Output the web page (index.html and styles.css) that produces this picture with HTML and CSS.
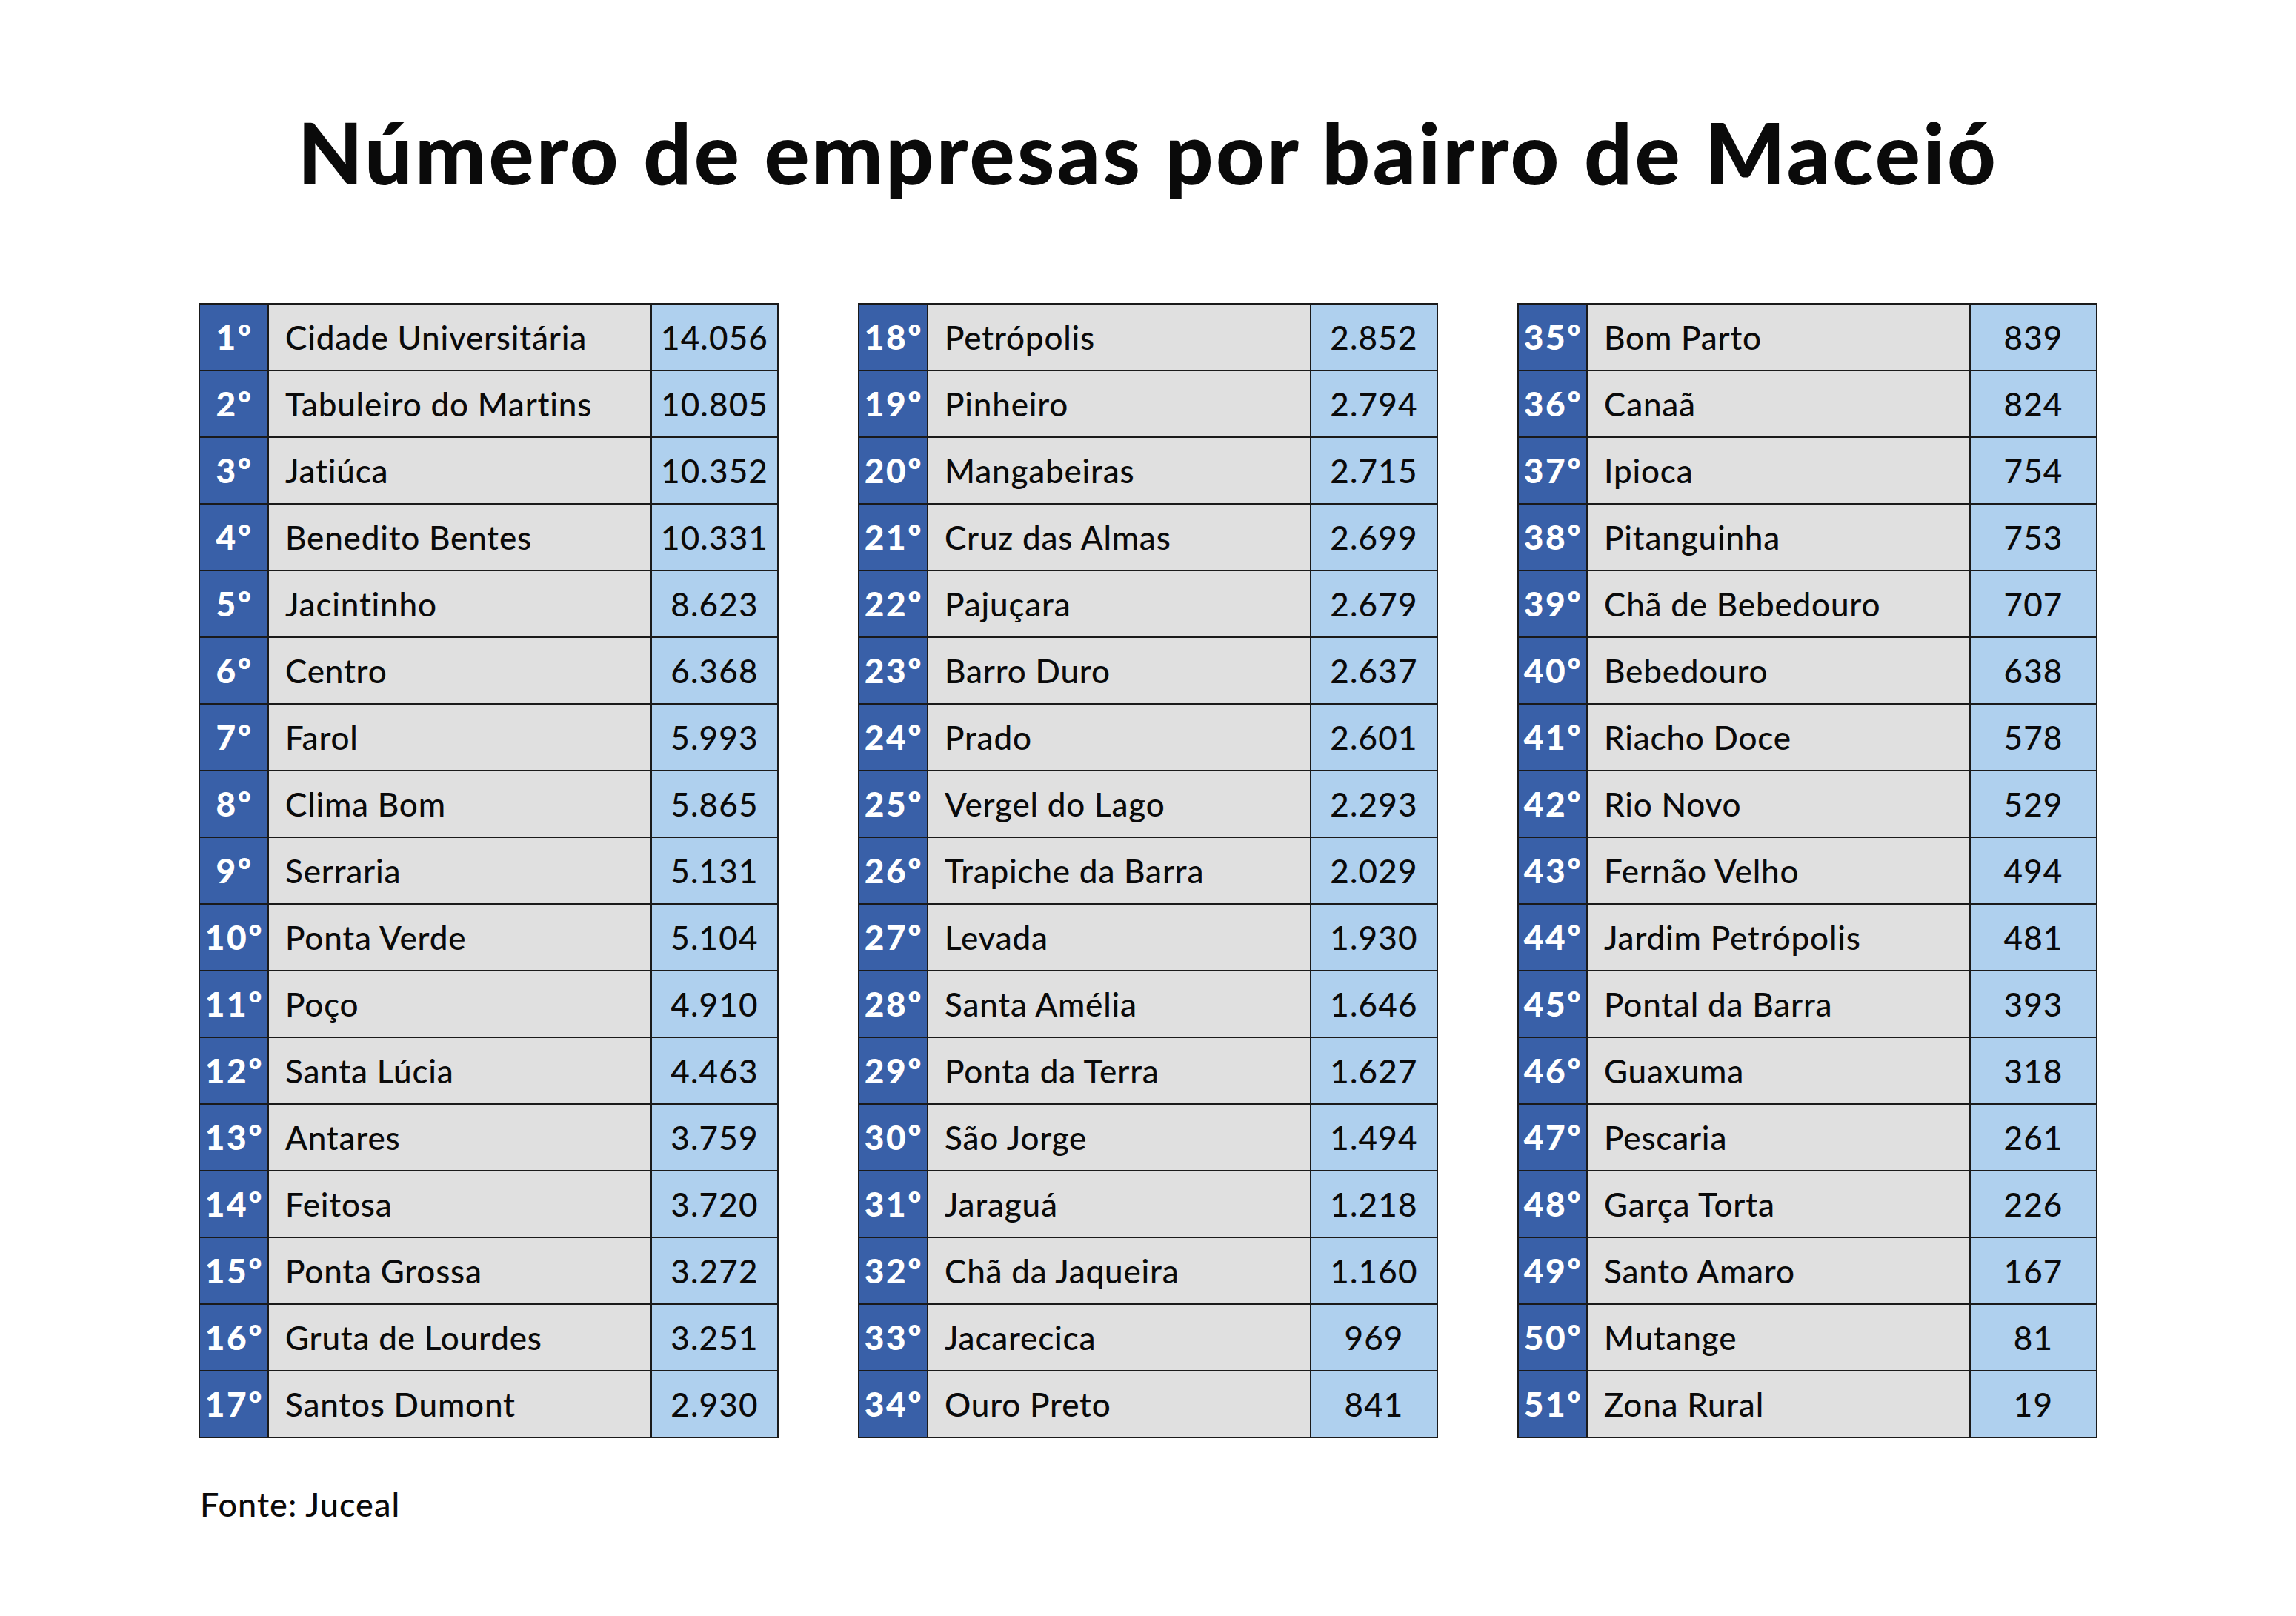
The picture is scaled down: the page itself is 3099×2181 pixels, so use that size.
FILE: index.html
```html
<!DOCTYPE html>
<html lang="pt-BR">
<head>
<meta charset="utf-8">
<title>Número de empresas por bairro de Maceió</title>
<link rel="stylesheet" href="styles.css">
</head>
<body>
<main class="page">
  <h1 class="title">Número de empresas por bairro de Maceió</h1>
  <div class="tables">
    <table class="rank-table">
      <tr><td class="pos">1º</td><td class="name">Cidade Universitária</td><td class="num">14.056</td></tr>
      <tr><td class="pos">2º</td><td class="name">Tabuleiro do Martins</td><td class="num">10.805</td></tr>
      <tr><td class="pos">3º</td><td class="name">Jatiúca</td><td class="num">10.352</td></tr>
      <tr><td class="pos">4º</td><td class="name">Benedito Bentes</td><td class="num">10.331</td></tr>
      <tr><td class="pos">5º</td><td class="name">Jacintinho</td><td class="num">8.623</td></tr>
      <tr><td class="pos">6º</td><td class="name">Centro</td><td class="num">6.368</td></tr>
      <tr><td class="pos">7º</td><td class="name">Farol</td><td class="num">5.993</td></tr>
      <tr><td class="pos">8º</td><td class="name">Clima Bom</td><td class="num">5.865</td></tr>
      <tr><td class="pos">9º</td><td class="name">Serraria</td><td class="num">5.131</td></tr>
      <tr><td class="pos">10º</td><td class="name">Ponta Verde</td><td class="num">5.104</td></tr>
      <tr><td class="pos">11º</td><td class="name">Poço</td><td class="num">4.910</td></tr>
      <tr><td class="pos">12º</td><td class="name">Santa Lúcia</td><td class="num">4.463</td></tr>
      <tr><td class="pos">13º</td><td class="name">Antares</td><td class="num">3.759</td></tr>
      <tr><td class="pos">14º</td><td class="name">Feitosa</td><td class="num">3.720</td></tr>
      <tr><td class="pos">15º</td><td class="name">Ponta Grossa</td><td class="num">3.272</td></tr>
      <tr><td class="pos">16º</td><td class="name">Gruta de Lourdes</td><td class="num">3.251</td></tr>
      <tr><td class="pos">17º</td><td class="name">Santos Dumont</td><td class="num">2.930</td></tr>
    </table>
    <table class="rank-table">
      <tr><td class="pos">18º</td><td class="name">Petrópolis</td><td class="num">2.852</td></tr>
      <tr><td class="pos">19º</td><td class="name">Pinheiro</td><td class="num">2.794</td></tr>
      <tr><td class="pos">20º</td><td class="name">Mangabeiras</td><td class="num">2.715</td></tr>
      <tr><td class="pos">21º</td><td class="name">Cruz das Almas</td><td class="num">2.699</td></tr>
      <tr><td class="pos">22º</td><td class="name">Pajuçara</td><td class="num">2.679</td></tr>
      <tr><td class="pos">23º</td><td class="name">Barro Duro</td><td class="num">2.637</td></tr>
      <tr><td class="pos">24º</td><td class="name">Prado</td><td class="num">2.601</td></tr>
      <tr><td class="pos">25º</td><td class="name">Vergel do Lago</td><td class="num">2.293</td></tr>
      <tr><td class="pos">26º</td><td class="name">Trapiche da Barra</td><td class="num">2.029</td></tr>
      <tr><td class="pos">27º</td><td class="name">Levada</td><td class="num">1.930</td></tr>
      <tr><td class="pos">28º</td><td class="name">Santa Amélia</td><td class="num">1.646</td></tr>
      <tr><td class="pos">29º</td><td class="name">Ponta da Terra</td><td class="num">1.627</td></tr>
      <tr><td class="pos">30º</td><td class="name">São Jorge</td><td class="num">1.494</td></tr>
      <tr><td class="pos">31º</td><td class="name">Jaraguá</td><td class="num">1.218</td></tr>
      <tr><td class="pos">32º</td><td class="name">Chã da Jaqueira</td><td class="num">1.160</td></tr>
      <tr><td class="pos">33º</td><td class="name">Jacarecica</td><td class="num">969</td></tr>
      <tr><td class="pos">34º</td><td class="name">Ouro Preto</td><td class="num">841</td></tr>
    </table>
    <table class="rank-table">
      <tr><td class="pos">35º</td><td class="name">Bom Parto</td><td class="num">839</td></tr>
      <tr><td class="pos">36º</td><td class="name">Canaã</td><td class="num">824</td></tr>
      <tr><td class="pos">37º</td><td class="name">Ipioca</td><td class="num">754</td></tr>
      <tr><td class="pos">38º</td><td class="name">Pitanguinha</td><td class="num">753</td></tr>
      <tr><td class="pos">39º</td><td class="name">Chã de Bebedouro</td><td class="num">707</td></tr>
      <tr><td class="pos">40º</td><td class="name">Bebedouro</td><td class="num">638</td></tr>
      <tr><td class="pos">41º</td><td class="name">Riacho Doce</td><td class="num">578</td></tr>
      <tr><td class="pos">42º</td><td class="name">Rio Novo</td><td class="num">529</td></tr>
      <tr><td class="pos">43º</td><td class="name">Fernão Velho</td><td class="num">494</td></tr>
      <tr><td class="pos">44º</td><td class="name">Jardim Petrópolis</td><td class="num">481</td></tr>
      <tr><td class="pos">45º</td><td class="name">Pontal da Barra</td><td class="num">393</td></tr>
      <tr><td class="pos">46º</td><td class="name">Guaxuma</td><td class="num">318</td></tr>
      <tr><td class="pos">47º</td><td class="name">Pescaria</td><td class="num">261</td></tr>
      <tr><td class="pos">48º</td><td class="name">Garça Torta</td><td class="num">226</td></tr>
      <tr><td class="pos">49º</td><td class="name">Santo Amaro</td><td class="num">167</td></tr>
      <tr><td class="pos">50º</td><td class="name">Mutange</td><td class="num">81</td></tr>
      <tr><td class="pos">51º</td><td class="name">Zona Rural</td><td class="num">19</td></tr>
    </table>
  </div>
  <p class="source">Fonte: Juceal</p>
</main>
</body>
</html>
```

FILE: styles.css
```css
html, body {
  margin: 0;
  padding: 0;
  background: #ffffff;
}

.page {
  width: 3099px;
  height: 2181px;
  box-sizing: border-box;
  padding: 0 268px;
  font-family: "Lato", "Liberation Sans", sans-serif;
  color: #0a0a0a;
}

.title {
  margin: 0;
  padding-top: 148px;
  height: 409px;
  box-sizing: border-box;
  text-align: center;
  font-size: 114px;
  line-height: 114px;
  font-weight: 900;
  letter-spacing: 3.3px;
}

.tables {
  display: flex;
  justify-content: space-between;
  align-items: flex-start;
}

.rank-table {
  border-collapse: collapse;
  table-layout: fixed;
  width: 783px;
}

.rank-table td {
  height: 88px;
  padding: 0;
  border: 2px solid #1a1a1a;
  font-size: 44px;
  line-height: 1;
}

.pos {
  width: 91px;
  background: #3960a8;
  color: #ffffff;
  font-weight: 900;
  text-align: center;
  font-size: 46px !important;
  letter-spacing: 2.5px;
  text-indent: 2px;
}

.name {
  background: #e0e0e0;
  padding-left: 22px !important;
  font-weight: 500;
  white-space: nowrap;
  letter-spacing: 0.8px;
}

.num {
  width: 169px;
  background: #afd0ee;
  text-align: center;
  font-weight: 500;
  letter-spacing: 1.2px;
}

.source {
  margin: 62px 0 0 2px;
  font-size: 45px;
  font-weight: 500;
  letter-spacing: 1px;
}
```
